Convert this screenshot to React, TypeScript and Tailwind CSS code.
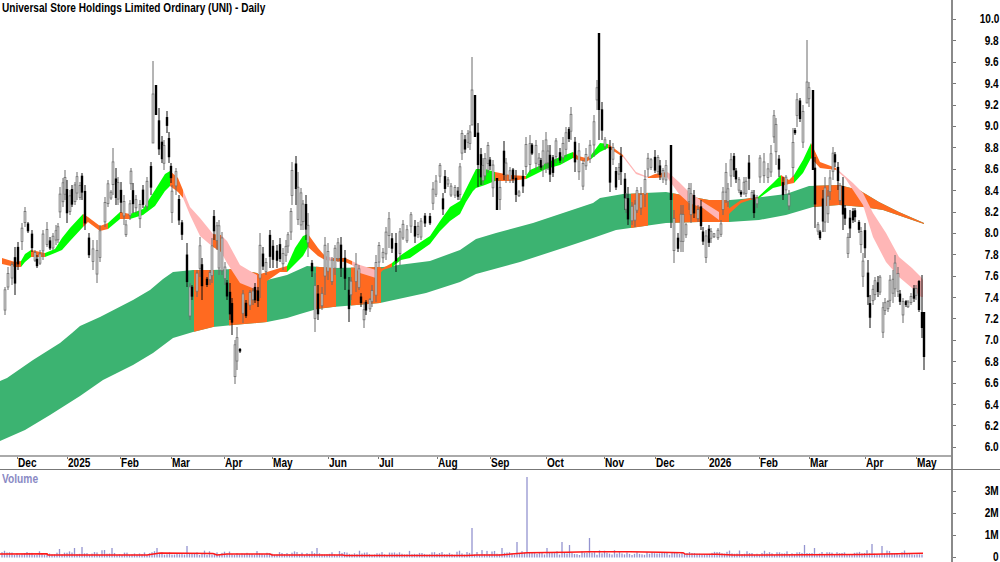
const LONG_TOP: number[][] = [[0,381],[7,378],[33,360],[60,343],[72,333],[80,326],[100,317],[133,300],[150,290],[163,279],[173,272],[193,270],[213,270],[233,269],[257,273],[267,280],[287,275],[307,266],[333,268],[383,267],[430,261],[460,250],[476,239],[496,233],[533,223],[566,212],[593,203],[600,198],[623,194],[666,192],[709,200],[730,200],[753,198],[786,194],[809,186],[839,185],[859,190],[879,202],[899,212],[924,223]];
const LONG_BOT: number[][] = [[0,441],[25,430],[50,415],[80,396],[103,380],[117,373],[133,365],[153,353],[173,338],[193,332],[213,327],[233,325],[267,322],[287,318],[300,314],[317,309],[333,307],[380,303],[426,293],[460,282],[476,274],[520,262],[566,247],[593,238],[616,230],[666,223],[699,222],[729,222],[759,220],[786,215],[813,207],[839,205],[863,207],[883,210],[924,224]];
const ORANGE_RANGES = [[194,20],[229,38],[316,20],[351,30],[631,17],[673,56],[814,110]];

const SHORT: [number,number,number,string][] = [[2,258,264,'O'],[15,262,267,'O'],[21,261,267,'L'],[25,254,262,'L'],[31,250,257,'O'],[45,253,257,'L'],[55,249,253,'L'],[62,238,250,'L'],[70,228,241,'L'],[83,214,227,'O'],[88,217,222,'O'],[100,226,231,'O'],[108,223,229,'L'],[120,212,219,'O'],[130,214,219,'L'],[143,209,215,'L'],[155,190,206,'L'],[165,174,191,'L'],[170,171,186,'O'],[178,178,192,'O'],[183,190,198,'P'],[190,207,215,'P'],[200,218,236,'P'],[213,234,247,'O'],[221,235,252,'P'],[227,241,263,'P'],[240,265,283,'P'],[257,275,290,'O'],[267,272,281,'O'],[280,268,272,'O'],[287,266,272,'L'],[295,248,264,'L'],[303,236,256,'L'],[308,234,247,'O'],[318,248,256,'O'],[325,256,260,'P'],[333,258,261,'O'],[345,258,262,'O'],[352,261,265,'P'],[360,265,273,'P'],[376,270,278,'O'],[383,268,270,'O'],[392,263,267,'L'],[401,255,260,'L'],[410,249,258,'L'],[430,236,244,'L'],[440,221,231,'L'],[450,207,221,'L'],[460,201,214,'L'],[466,189,202,'L'],[473,175,191,'L'],[476,169,188,'L'],[485,169,185,'L'],[495,172,181,'O'],[510,175,181,'O'],[526,176,179,'L'],[530,170,177,'L'],[546,163,169,'L'],[560,157,165,'L'],[573,152,158,'O'],[578,156,160,'O'],[586,158,162,'O'],[591,155,159,'L'],[600,143,152,'L'],[608,144,148,'O'],[615,149,152,'O'],[623,155,157,'P'],[636,172,174,'P'],[648,177,178,'O'],[655,174,178,'O'],[667,172,177,'P'],[669,173,180,'P'],[679,182,194,'P'],[689,192,203,'P'],[703,202,208,'P'],[719,212,220,'O'],[723,213,220,'O'],[731,207,212,'O'],[741,200,203,'O'],[750,198,200,'O'],[758,197,199,'L'],[773,183,188,'L'],[781,175,186,'O'],[789,180,184,'O'],[794,175,183,'L'],[803,160,173,'L'],[811,143,158,'O'],[820,162,168,'O'],[836,168,170,'P'],[845,176,178,'P'],[853,183,190,'P'],[863,193,205,'P'],[873,213,237,'P'],[886,233,262,'P'],[899,257,277,'P'],[912,268,288,'P'],[921,277,297,'P'],[923,280,297,'P']];

// x, high, low, black (1), body top, body bottom
const C: number[][] = [[5,287,315],[8,267,290],[12,262,285],[15,247,295,1],[18,242,270,1],[22,223,250],[25,207,227],[28,222,233,1],[32,230,252,1],[35,250,262],[37,255,268,1],[40,250,265],[43,230,260],[47,222,247],[50,237,250,1],[53,233,250],[56,225,245],[58,223,243],[60,187,218],[63,178,207],[65,170,200],[67,180,223,1],[70,190,215],[72,185,207,1],[75,182,205],[77,172,200],[80,182,200],[82,173,200,1],[85,185,230,1],[89,233,258,1],[93,240,270],[97,240,283],[100,225,262],[105,197,227],[108,180,207],[111,190,200],[113,148,195],[116,168,205,1],[118,177,205],[121,182,213,1],[124,195,225],[126,220,237],[130,200,220],[131,168,190],[133,183,213,1],[136,195,213],[140,200,228],[143,185,208,1],[147,177,210],[151,162,195,1],[153,61,143,0,94,143],[156,85,115,1,85,115],[159,108,155,1],[162,136,163,1],[164,140,170],[167,111,133,1],[169,132,163,1],[171,163,183,1],[172,185,223],[176,168,195],[179,195,225,1],[182,220,240,1],[187,243,287,1],[190,283,320],[192,285,300,1],[197,270,297],[200,237,277],[202,258,300,1],[207,277,287,1],[210,270,285],[212,238,283],[214,210,240,1],[217,222,250],[219,220,275],[222,232,275],[225,262,285],[227,280,300,1],[230,283,320,1],[232,298,335,1],[235,340,384],[237,327,370],[240,348,353,1],[243,290,323],[246,300,318,1],[250,290,310],[253,288,305],[255,283,303,1],[258,287,307,1],[260,233,298],[263,247,270,1],[266,258,275],[270,230,268,1],[273,240,268,1],[277,245,268,1],[280,238,262,1],[283,248,270],[286,240,262],[288,232,253],[291,208,240],[292,162,205],[296,156,205,1],[298,172,225],[301,188,230],[303,200,230],[306,195,240,1],[308,213,257],[312,260,277,1],[315,273,332],[318,285,320,1],[322,287,310],[325,237,295],[328,243,280],[332,257,285],[335,245,275],[338,238,262],[341,237,277,1],[345,250,290,1],[349,277,322,1],[351,277,300],[356,253,292],[359,265,290],[361,293,307,1],[364,302,328],[366,300,315,1],[370,298,312],[372,285,307],[376,255,302],[379,242,267],[383,248,263],[386,227,260],[389,212,248],[392,233,253,1],[396,233,272,1],[400,228,265],[403,220,240],[407,225,243],[411,212,233],[415,220,243,1],[418,222,238],[421,218,240],[425,213,227,1],[430,213,225,1],[433,182,210],[436,175,197],[440,163,183],[443,193,215,1],[445,170,193,1],[448,177,187],[451,183,197],[455,185,198],[458,187,200,1],[460,163,200],[462,130,160],[465,135,153,1],[468,130,148],[470,125,150],[472,57,122,0,90,125],[475,95,137,1,95,137],[478,123,187,1],[481,148,185,1],[483,158,185],[485,153,180],[488,142,173],[490,157,170,1],[493,160,197],[497,178,210,1,178,210],[500,180,210],[504,141,180,1],[506,158,183],[510,167,183],[513,168,183,1],[516,170,202,1],[519,190,197],[523,170,193,1],[526,137,175],[530,135,173],[532,143,155,1],[536,140,170],[539,153,170],[541,158,170,1],[543,140,177],[546,132,173],[548,145,170],[550,145,182,1],[553,155,177,1],[556,138,163],[560,148,163,1],[563,137,163],[566,127,157],[569,127,142,1],[571,107,140],[575,137,172,1],[579,143,180],[583,160,190],[586,148,170],[590,140,163],[594,115,157],[597,80,110],[599,33,140,1,33,110],[602,102,140,1],[605,137,150],[610,140,192,1],[613,143,165],[616,167,190,1],[619,163,180],[621,147,185,1],[625,173,210,1],[626,193,213],[628,187,225,1],[632,202,225],[635,200,227],[637,187,213],[641,187,215],[645,170,207],[648,153,177],[651,158,170],[655,150,173,1],[658,155,175],[660,160,180,1],[663,168,183],[666,160,185],[671,145,228,1,145,200],[674,210,263],[678,233,252,1],[681,205,252],[683,205,252],[686,223,238],[689,183,210],[691,183,223],[694,190,218,1],[698,205,222],[701,200,230,1],[703,227,245,1],[706,230,263],[709,225,247,1],[711,228,243],[714,233,238],[718,228,240],[721,220,237],[723,187,215],[726,163,203],[728,183,207],[731,153,187],[734,153,177,1],[736,168,183,1],[739,177,193],[741,190,197,1],[744,177,195],[746,177,197],[749,155,190,1],[752,190,200],[754,190,218,1],[757,195,208],[760,155,183],[764,153,183],[768,163,183],[771,145,177],[774,110,143],[776,118,165],[779,155,177,1],[783,177,200,1],[786,175,195],[789,190,210],[793,128,177],[795,128,135,1],[797,93,127],[800,98,122,1],[803,105,148],[807,40,103,0,82,103],[809,82,107],[813,90,170,1,90,170],[815,157,228,1],[818,222,235],[820,230,240,1],[823,190,232,1],[825,177,232],[828,190,223],[830,170,200],[833,147,180],[835,152,167,1],[838,162,190,1],[840,183,205],[843,177,230,1],[845,205,225,1],[848,233,258],[850,210,238,1],[853,208,223,1],[855,208,222,1],[859,220,233,1],[861,227,253],[863,253,287],[865,223,258,1],[868,260,305,1],[870,295,328,1],[873,285,305],[875,277,300],[878,276,297,1],[880,275,295],[883,302,338],[885,298,315],[888,300,312],[890,275,307],[893,270,303],[895,255,297],[898,267,297],[900,290,305,1],[903,298,323],[906,300,307,1],[908,300,308],[911,293,305],[914,285,302,1],[916,285,300],[919,280,312,1,281,310],[922,275,338,1,312,328],[924,312,370,1,312,357]];

const VOL_SPIKES: Record<number, number> = {59:549,75:548,83:547,105:550,113:548,156:548,187:546,316:548,340:551,473:528,503:548,518:542,526:477,548:548,563:542,569:545,589:538,804:545,815:548,873:544,883:546,924:549};
const RED_LINE = "0,554 47,553.7 48,555 147,555 160,553 213,553.5 217,555 227,554 270,554 272,555 343,555 345,555.6 467,555.6 477,555 500,555 527,552.7 567,552.3 590,551.7 630,551.7 660,552.3 683,552.7 685,554 717,554.3 733,555 860,554.5 923,553.3";
const MONTHS: [string, number][] = [["Dec",17],["2025",67],["Feb",120],["Mar",171],["Apr",224],["May",272],["Jun",328],["Jul",378],["Aug",437],["Sep",490],["Oct",546],["Nov",604],["Dec",655],["2026",708],["Feb",759],["Mar",809],["Apr",865],["May",916]];
const PRICES = ["10.0","9.8","9.6","9.4","9.2","9.0","8.8","8.6","8.4","8.2","8.0","7.8","7.6","7.4","7.2","7.0","6.8","6.6","6.4","6.2","6.0"];
const VOL_LABELS = ["3M","2M","1M","0"];
const COLORS: Record<string,string> = { L:"#00ff00", O:"#ff6a20", P:"#ffb6b6" };

const pts = (a: number[][]) => a.map((p) => p.join(",")).join(" ");

function shortBands() {
  const out: { c: string; d: string }[] = [];
  let i = 0;
  while (i < SHORT.length - 1) {
    const c = SHORT[i][3];
    let j = i + 1;
    while (j < SHORT.length - 1 && SHORT[j][3] === c) j++;
    const seg = SHORT.slice(i, j + 1);
    const top = seg.map((s) => `${s[0]},${s[1]}`);
    const bot = seg.map((s) => `${s[0]},${s[2]}`).reverse();
    out.push({ c: COLORS[c], d: [...top, ...bot].join(" ") });
    i = j;
  }
  return out;
}

function rnd(seed: number) {
  const v = Math.sin(seed * 12.9898) * 43758.5453;
  return v - Math.floor(v);
}

function Candles() {
  return (
    <g>
      {C.map((c, i) => {
        const [x, hi, lo, k, bt, bb] = c;
        const L = lo - hi;
        const top = bt ?? hi + L * (0.1 + rnd(i) * 0.2);
        const bot = bb ?? lo - L * (0.1 + rnd(i + 50) * 0.25);
        return (
          <g key={i}>
            <line x1={x} x2={x} y1={hi} y2={lo} stroke={k ? "#111" : "#6a6a6a"} strokeWidth={1} />
            {k ? (
              <rect x={x - 1.2} y={top} width={2.4} height={Math.max(bot - top, 1)} fill="#000" />
            ) : (
              <rect x={x - 0.9} y={top} width={1.8} height={Math.max(bot - top, 1)} fill="#f2f2f2" stroke="#6e6e6e" strokeWidth={0.8} />
            )}
          </g>
        );
      })}
    </g>
  );
}

function VolumeBars() {
  const bars: { x: number; y: number }[] = [];
  for (let x = 2; x <= 924; x += 2.5) {
    let y = 552 + rnd(x) * 3 - (rnd(x + 7) > 0.85 ? 2 : 0);
    for (const k of Object.keys(VOL_SPIKES)) {
      if (Math.abs(Number(k) - x) < 1.25) y = VOL_SPIKES[Number(k)];
    }
    bars.push({ x, y });
  }
  return (
    <g>
      {bars.map((b, i) => (
        <rect key={i} x={b.x - 0.65} y={b.y} width={1.3} height={557.5 - b.y} fill="#9494d0" />
      ))}
    </g>
  );
}

function AxisRow({ label, h }: { label: string; h: string }) {
  return (
    <div className={`flex items-center ${h}`}>
      <span className="h-px w-[3px] shrink-0 bg-[#777]" />
      <span className="ml-auto mr-[1px] inline-block origin-right scale-x-[0.84] text-[12px] leading-none font-bold text-black">
        {label}
      </span>
    </div>
  );
}

export default function App() {
  return (
    <div className="relative flex h-[562px] w-[1000px] flex-col overflow-hidden bg-white font-['Liberation_Sans',Arial,sans-serif]">
      <div className="flex h-[455px] shrink-0">
        <div className="relative w-[951px] shrink-0">
          <div className="absolute left-[2px] top-[1px] origin-left scale-x-[0.84] whitespace-nowrap text-[12px] leading-[14px] font-bold text-black">
            Universal Store Holdings Limited Ordinary (UNI) - Daily
          </div>
          <svg width="951" height="455" viewBox="0 0 951 455" className="block">
            <defs>
              <clipPath id="orangeClip">
                {ORANGE_RANGES.map(([x, w]) => (
                  <rect key={x} x={x} y={0} width={w} height={455} />
                ))}
              </clipPath>
            </defs>
            <polygon points={pts([...LONG_TOP, ...[...LONG_BOT].reverse()])} fill="#3cb371" />
            <polygon points={pts([...LONG_TOP, ...[...LONG_BOT].reverse()])} fill="#ff6a20" clipPath="url(#orangeClip)" />
            {shortBands().map((b, i) => (
              <polygon key={i} points={b.d} fill={b.c} />
            ))}
            <Candles />
          </svg>
        </div>
        <div className="flex flex-1 flex-col border-l-2 border-[#8a8a8a] pt-[8.8px]">
          {PRICES.map((p) => (
            <AxisRow key={p} label={p} h="h-[21.4px] shrink-0" />
          ))}
        </div>
      </div>

      <div className="flex h-[15px] shrink-0 border-b border-[#777]">
        <div className="flex w-[951px] shrink-0 border-t-2 border-[#aaa] pl-[17px]">
          {MONTHS.map(([m, x], i) => (
            <div
              key={m + x}
              className="flex shrink-0"
              style={{ width: (i < MONTHS.length - 1 ? MONTHS[i + 1][1] : 951) - x }}
            >
              <span className="h-[2px] w-px shrink-0 bg-[#777]" />
              <span className="inline-block origin-left scale-x-[0.84] text-[12px] leading-[13px] font-bold text-black">
                {m}
              </span>
            </div>
          ))}
        </div>
        <div className="flex-1 border-l-2 border-[#8a8a8a]" />
      </div>

      <div className="flex min-h-0 flex-1">
        <div className="relative w-[951px] shrink-0">
          <div className="absolute left-[2px] top-[2px] origin-left scale-x-[0.85] text-[12px] leading-[14px] font-bold text-[#8a8ac4]">
            Volume
          </div>
          <svg width="951" height="92" viewBox="0 470 951 92" className="block">
            <VolumeBars />
            <polyline points={RED_LINE} fill="none" stroke="#ff1818" strokeWidth={1.5} />
          </svg>
        </div>
        <div className="flex flex-1 flex-col border-l-2 border-[#8a8a8a] pt-[10px]">
          {VOL_LABELS.map((p) => (
            <AxisRow key={p} label={p} h="h-[22px] shrink-0" />
          ))}
        </div>
      </div>
    </div>
  );
}
